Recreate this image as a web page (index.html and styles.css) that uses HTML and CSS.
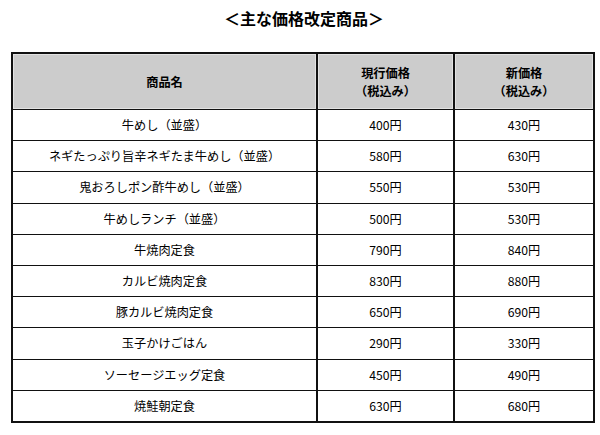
FILE: index.html
```html
<!DOCTYPE html>
<html lang="ja">
<head>
<meta charset="utf-8">
<link rel="stylesheet" href="styles.css">
</head>
<body>
<div class="page">
  <h2 class="title">＜主な価格改定商品＞</h2>
  <table class="prices">
    <colgroup>
      <col class="c-name">
      <col class="c-old">
      <col class="c-new">
    </colgroup>
    <thead>
      <tr>
        <th>商品名</th>
        <th>現行価格<br>（税込み）</th>
        <th>新価格<br>（税込み）</th>
      </tr>
    </thead>
    <tbody>
      <tr><td>牛めし（並盛）</td><td>400円</td><td>430円</td></tr>
      <tr><td>ネギたっぷり旨辛ネギたま牛めし（並盛）</td><td>580円</td><td>630円</td></tr>
      <tr><td>鬼おろしポン酢牛めし（並盛）</td><td>550円</td><td>530円</td></tr>
      <tr><td>牛めしランチ（並盛）</td><td>500円</td><td>530円</td></tr>
      <tr><td>牛焼肉定食</td><td>790円</td><td>840円</td></tr>
      <tr><td>カルビ焼肉定食</td><td>830円</td><td>880円</td></tr>
      <tr><td>豚カルビ焼肉定食</td><td>650円</td><td>690円</td></tr>
      <tr><td>玉子かけごはん</td><td>290円</td><td>330円</td></tr>
      <tr><td>ソーセージエッグ定食</td><td>450円</td><td>490円</td></tr>
      <tr><td>焼鮭朝定食</td><td>630円</td><td>680円</td></tr>
    </tbody>
  </table>
</div>
</body>
</html>
```
FILE: styles.css
```css
html, body {
  margin: 0;
  padding: 0;
  background: #fff;
}
body {
  font-family: "Noto Sans CJK JP", "Noto Sans", sans-serif;
  color: #000;
}
.page {
  padding: 8px 7px 0 11px;
}
.title {
  margin: 0;
  text-align: center;
  font-size: 16px;
  line-height: 21px;
  font-weight: bold;
  padding-left: 4px;
}
.prices {
  margin-top: 23px;
  width: 582px;
  border-collapse: collapse;
  border: 2px solid #111;
  table-layout: fixed;
  font-size: 12.2px;
}
.c-name { width: 305px; }
.c-old { width: 137px; }
.c-new { width: 140px; }
.prices th {
  background: #cccccc;
  box-shadow: inset 0 0 0 1px #e2e2e2;
  font-weight: bold;
  height: 55px;
  line-height: 18px;
  padding: 0;
  border: 2px solid #111;
  border-bottom-width: 1px;
  text-align: center;
}
.prices td {
  height: 30.2px;
  padding: 0;
  text-align: center;
  border-top: 1px solid #111;
  border-left: 2px solid #111;
  border-right: 2px solid #111;
  line-height: 16px;
}
```
